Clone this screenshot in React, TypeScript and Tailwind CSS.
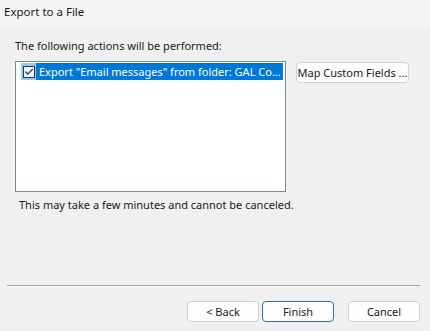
import { Check } from 'lucide-react'

function WinButton({ label, primary }: { label: string; primary?: boolean }) {
  return (
    <button
      className={`flex h-[21px] w-[72px] items-center justify-center rounded-[4px] text-[11px] leading-none whitespace-nowrap text-[#1a1a1a] ${
        primary ? 'border border-[#2f72b8] bg-[#fdfdfd]' : 'border border-[#d0d0d0] bg-[#fdfdfd]'
      }`}
    >
      {label}
    </button>
  )
}

export default function App() {
  return (
    <div
      className="flex h-[331px] w-[430px] flex-col bg-[#f0f0f0] text-[#1a1a1a]"
      style={{ fontFamily: '"Noto Sans", "Open Sans", sans-serif' }}
    >
      {/* Title bar */}
      <div className="h-[26px] bg-[#f4f4f4] pl-[4px] pt-[4px] text-[11.5px] leading-[16px]">Export to a File</div>

      <div className="flex flex-col pl-[15px]">
        <p className="mt-[12px] text-[11px] leading-[16px] whitespace-nowrap">The following actions will be performed:</p>

        <div className="mt-[7px] flex items-start gap-[10px]">
          {/* Action list */}
          <div className="h-[131px] w-[271px] border border-[#828790] bg-white pl-[5px] pt-[1px]">
            <div className="flex h-[17px] items-center">
              <div className="flex h-[17px] w-[15px] items-center justify-center bg-[#99c9ef]">
                <div className="flex h-[12px] w-[12px] items-center justify-center border border-[#1d3557] bg-[#eef6fd]">
                  <Check size={10} strokeWidth={3} className="text-[#1d3557]" />
                </div>
              </div>
              <div className="flex h-[17px] w-[247px] items-center bg-[#0078d7] pl-[3px] text-[11px] leading-none whitespace-nowrap text-white">
                Export "Email messages" from folder: GAL Co...
              </div>
            </div>
          </div>

          <button className="mt-[1px] flex h-[21px] w-[113px] items-center justify-center rounded-[4px] border border-[#d0d0d0] bg-[#fdfdfd] text-[11px] leading-none whitespace-nowrap">
            Map Custom Fields ...
          </button>
        </div>

        <p className="mt-[5px] pl-[4px] text-[11px] leading-[16px] whitespace-nowrap">This may take a few minutes and cannot be canceled.</p>
      </div>

      <div className="ml-[7px] mr-[10px] mt-[72px] h-[2px] border-t border-[#a0a0a0] bg-[#fafafa]" />

      <div className="mt-[14px] flex justify-end pr-[10px]">
        <div className="flex gap-[3px]">
          <WinButton label="< Back" />
          <WinButton label="Finish" primary />
        </div>
        <div className="ml-[14px] flex">
          <WinButton label="Cancel" />
        </div>
      </div>
    </div>
  )
}
